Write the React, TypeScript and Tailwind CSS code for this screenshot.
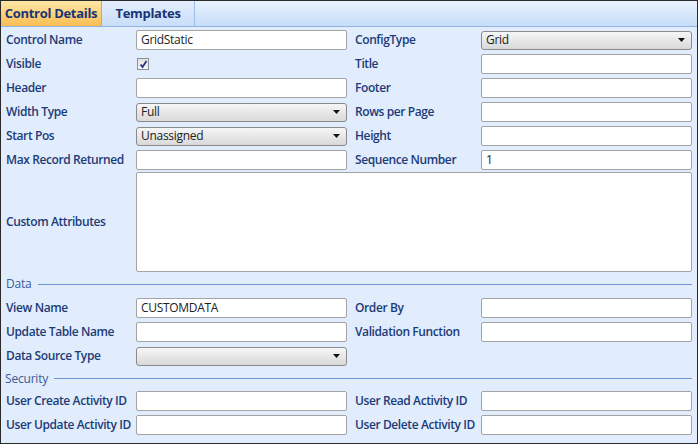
import React from "react";

const font = { fontFamily: '"Open Sans", "Noto Sans", sans-serif' };

function Label({ children }: { children: React.ReactNode }) {
  return (
    <div className="text-[12px] font-semibold text-[#1d3b78] leading-none whitespace-nowrap tracking-[-0.4px]">
      {children}
    </div>
  );
}

function TextInput({ value = "" }: { value?: string }) {
  return (
    <div className="h-[20px] w-full bg-white border border-[#a3a3a3] rounded-[2px] flex items-center px-[4px] text-[12px] text-[#222] leading-none tracking-[-0.3px]">
      {value}
    </div>
  );
}

function Select({ value = "" }: { value?: string }) {
  return (
    <div className="h-[19px] w-full border border-[#8a8a8a] rounded-[3px] bg-gradient-to-b from-[#f6f6f6] to-[#d9d9d9] flex items-center justify-between pl-[4px] pr-[6px] text-[12px] text-[#222] leading-none tracking-[-0.3px]">
      <span>{value}</span>
      <svg width="7" height="4" viewBox="0 0 7 4">
        <path d="M0 0 H7 L3.5 4 Z" fill="#111" />
      </svg>
    </div>
  );
}

function Check() {
  return (
    <div className="w-[12px] h-[12px] ml-[1px] border border-[#8f8f8f] bg-gradient-to-b from-[#e2e2e2] to-[#f6f6f6] flex items-center justify-center">
      <svg width="9" height="9" viewBox="0 0 9 9">
        <path d="M1.5 4.5 L3.5 7 L7.5 1" stroke="#2a2f8a" strokeWidth="1.8" fill="none" />
      </svg>
    </div>
  );
}

function Row({ l1, c1, l2, c2 }: { l1: string; c1: React.ReactNode; l2?: string; c2?: React.ReactNode }) {
  return (
    <div className="grid grid-cols-[130px_211px_8px_126px_211px] h-[24px] items-center">
      <Label>{l1}</Label>
      <div>{c1}</div>
      <div />
      {l2 ? <Label>{l2}</Label> : <div />}
      <div>{c2}</div>
    </div>
  );
}

function Section({ title, h }: { title: string; h: string }) {
  return (
    <div className={`flex items-center ${h}`}>
      <span className="text-[12px] text-[#3a5a98] leading-none tracking-[-0.2px]">{title}</span>
      <div className="flex-1 h-px bg-[#6d97d2] ml-[6px]" />
    </div>
  );
}

export default function App() {
  return (
    <div style={font} className="w-[698px] h-[444px] border border-[#2a2a2a] bg-[#e1edfc] overflow-hidden flex flex-col">
      <div className="h-[26px] flex border-b border-[#92b4e2] bg-gradient-to-b from-[#e9f2fe] to-[#c7ddf9]">
        <div className="w-[101px] flex items-center justify-center bg-gradient-to-b from-[#fde7a6] via-[#fbd27a] to-[#f8bd52] border-r border-[#d9a84a] text-[13px] font-bold text-[#1a3377] tracking-[-0.3px]">
          Control Details
        </div>
        <div className="w-[93px] flex items-center justify-center border-r border-[#9fc0ea] bg-gradient-to-b from-[#e3eefd] to-[#c9def9] text-[13px] font-bold text-[#1a3377] tracking-[-0.3px]">
          Templates
        </div>
      </div>
      <div className="pl-[5px] pr-[5px] pt-[1px] flex flex-col">
        <Row l1="Control Name" c1={<TextInput value="GridStatic" />} l2="ConfigType" c2={<Select value="Grid" />} />
        <Row l1="Visible" c1={<Check />} l2="Title" c2={<TextInput />} />
        <Row l1="Header" c1={<TextInput />} l2="Footer" c2={<TextInput />} />
        <Row l1="Width Type" c1={<Select value="Full" />} l2="Rows per Page" c2={<TextInput />} />
        <Row l1="Start Pos" c1={<Select value="Unassigned" />} l2="Height" c2={<TextInput />} />
        <Row l1="Max Record Returned" c1={<TextInput />} l2="Sequence Number" c2={<TextInput value="1" />} />
        <div className="grid grid-cols-[130px_556px] h-[100px] items-center">
          <Label>Custom Attributes</Label>
          <div className="h-[100px] bg-white border border-[#a3a3a3] rounded-[2px]" />
        </div>
        <Section title="Data" h="h-[24px]" />
        <Row l1="View Name" c1={<TextInput value="CUSTOMDATA" />} l2="Order By" c2={<TextInput />} />
        <Row l1="Update Table Name" c1={<TextInput />} l2="Validation Function" c2={<TextInput />} />
        <Row l1="Data Source Type" c1={<Select />} />
        <Section title="Security" h="h-[21px] -ml-[1px]" />
        <Row l1="User Create Activity ID" c1={<TextInput />} l2="User Read Activity ID" c2={<TextInput />} />
        <Row l1="User Update Activity ID" c1={<TextInput />} l2="User Delete Activity ID" c2={<TextInput />} />
      </div>
    </div>
  );
}
